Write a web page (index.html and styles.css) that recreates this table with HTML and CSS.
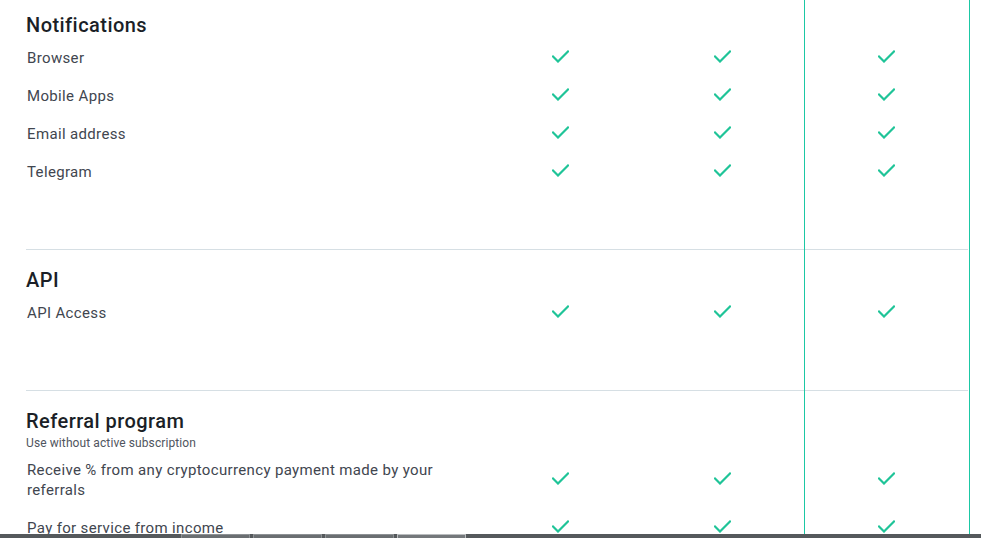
FILE: index.html
```html
<!DOCTYPE html>
<html lang="en">
<head>
<meta charset="utf-8">
<title>Plans</title>
<link rel="stylesheet" href="styles.css">
</head>
<body>
<div class="table">
  <section class="group group-first">
    <h2 class="group-title">Notifications</h2>
    <div class="row">
      <div class="label">Browser</div>
      <div class="cell"><svg class="check" viewBox="0 0 17 13"><path d="M1 6.5 L6 11.5 L16 1.5"/></svg></div>
      <div class="cell"><svg class="check" viewBox="0 0 17 13"><path d="M1 6.5 L6 11.5 L16 1.5"/></svg></div>
      <div class="cell"><svg class="check" viewBox="0 0 17 13"><path d="M1 6.5 L6 11.5 L16 1.5"/></svg></div>
    </div>
    <div class="row">
      <div class="label">Mobile Apps</div>
      <div class="cell"><svg class="check" viewBox="0 0 17 13"><path d="M1 6.5 L6 11.5 L16 1.5"/></svg></div>
      <div class="cell"><svg class="check" viewBox="0 0 17 13"><path d="M1 6.5 L6 11.5 L16 1.5"/></svg></div>
      <div class="cell"><svg class="check" viewBox="0 0 17 13"><path d="M1 6.5 L6 11.5 L16 1.5"/></svg></div>
    </div>
    <div class="row">
      <div class="label">Email address</div>
      <div class="cell"><svg class="check" viewBox="0 0 17 13"><path d="M1 6.5 L6 11.5 L16 1.5"/></svg></div>
      <div class="cell"><svg class="check" viewBox="0 0 17 13"><path d="M1 6.5 L6 11.5 L16 1.5"/></svg></div>
      <div class="cell"><svg class="check" viewBox="0 0 17 13"><path d="M1 6.5 L6 11.5 L16 1.5"/></svg></div>
    </div>
    <div class="row">
      <div class="label">Telegram</div>
      <div class="cell"><svg class="check" viewBox="0 0 17 13"><path d="M1 6.5 L6 11.5 L16 1.5"/></svg></div>
      <div class="cell"><svg class="check" viewBox="0 0 17 13"><path d="M1 6.5 L6 11.5 L16 1.5"/></svg></div>
      <div class="cell"><svg class="check" viewBox="0 0 17 13"><path d="M1 6.5 L6 11.5 L16 1.5"/></svg></div>
    </div>
  </section>

  <section class="group">
    <h2 class="group-title">API</h2>
    <div class="row">
      <div class="label">API Access</div>
      <div class="cell"><svg class="check" viewBox="0 0 17 13"><path d="M1 6.5 L6 11.5 L16 1.5"/></svg></div>
      <div class="cell"><svg class="check" viewBox="0 0 17 13"><path d="M1 6.5 L6 11.5 L16 1.5"/></svg></div>
      <div class="cell"><svg class="check" viewBox="0 0 17 13"><path d="M1 6.5 L6 11.5 L16 1.5"/></svg></div>
    </div>
  </section>

  <section class="group group-last">
    <h2 class="group-title">Referral program</h2>
    <p class="group-sub">Use without active subscription</p>
    <div class="row">
      <div class="label">Receive % from any cryptocurrency payment made by your referrals</div>
      <div class="cell"><svg class="check" viewBox="0 0 17 13"><path d="M1 6.5 L6 11.5 L16 1.5"/></svg></div>
      <div class="cell"><svg class="check" viewBox="0 0 17 13"><path d="M1 6.5 L6 11.5 L16 1.5"/></svg></div>
      <div class="cell"><svg class="check" viewBox="0 0 17 13"><path d="M1 6.5 L6 11.5 L16 1.5"/></svg></div>
    </div>
    <div class="row">
      <div class="label">Pay for service from income</div>
      <div class="cell"><svg class="check" viewBox="0 0 17 13"><path d="M1 6.5 L6 11.5 L16 1.5"/></svg></div>
      <div class="cell"><svg class="check" viewBox="0 0 17 13"><path d="M1 6.5 L6 11.5 L16 1.5"/></svg></div>
      <div class="cell"><svg class="check" viewBox="0 0 17 13"><path d="M1 6.5 L6 11.5 L16 1.5"/></svg></div>
    </div>
  </section>
</div>

<div class="taskbar">
  <span class="task"></span>
  <span class="task"></span>
  <span class="task"></span>
  <span class="task task-active"></span>
</div>
</body>
</html>
```

FILE: styles.css
```css
* {
  box-sizing: border-box;
}

html, body {
  margin: 0;
  padding: 0;
  background: #ffffff;
}

body {
  font-family: Roboto, "Noto Sans", "Liberation Sans", sans-serif;
  color: #3c414a;
  overflow: hidden;
}

.table {
  position: relative;
  width: 942px;
  margin-left: 26px;
}

.table::after {
  content: "";
  position: absolute;
  top: 0;
  bottom: -40px;
  left: 778px;
  width: 164px;
  border-left: 1px solid #1bc8a4;
  border-right: 1px solid #1bc8a4;
  pointer-events: none;
}

.group {
  padding: 16px 0 58px;
  border-bottom: 1px solid #d6dfe4;
}

.group-first {
  padding-top: 11px;
}

.group-last {
  border-bottom: 0;
  padding-bottom: 0;
}

.group-title {
  margin: 0;
  font-size: 20px;
  line-height: 28px;
  font-weight: 500;
  color: #1b1f27;
  letter-spacing: 0.45px;
}

.group-sub {
  margin: 0;
  font-size: 12px;
  line-height: 16px;
  color: #50555e;
  letter-spacing: 0.1px;
}

.row {
  display: grid;
  grid-template-columns: 453px 162px 163px 164px;
  align-items: center;
}

.label {
  padding: 9px 10px 9px 1px;
  font-size: 15px;
  line-height: 20px;
  color: #41464f;
  letter-spacing: 0.35px;
}

.cell {
  display: flex;
  justify-content: center;
  align-items: center;
}

.check {
  width: 17px;
  height: 13px;
  margin-top: -4px;
  fill: none;
  stroke: #1fc498;
  stroke-width: 2.2;
  stroke-linecap: square;
}

.taskbar {
  position: fixed;
  left: 0;
  right: 0;
  bottom: 0;
  height: 4px;
  background: #55595c;
  display: flex;
  gap: 3px;
  padding-left: 181px;
}

.task {
  width: 69px;
  height: 4px;
  background: #6a6e71;
  border: 1px solid #8d9194;
  border-bottom: 0;
}

.task-active {
  background: #74787b;
  border-color: #b9bcbe;
}
```
